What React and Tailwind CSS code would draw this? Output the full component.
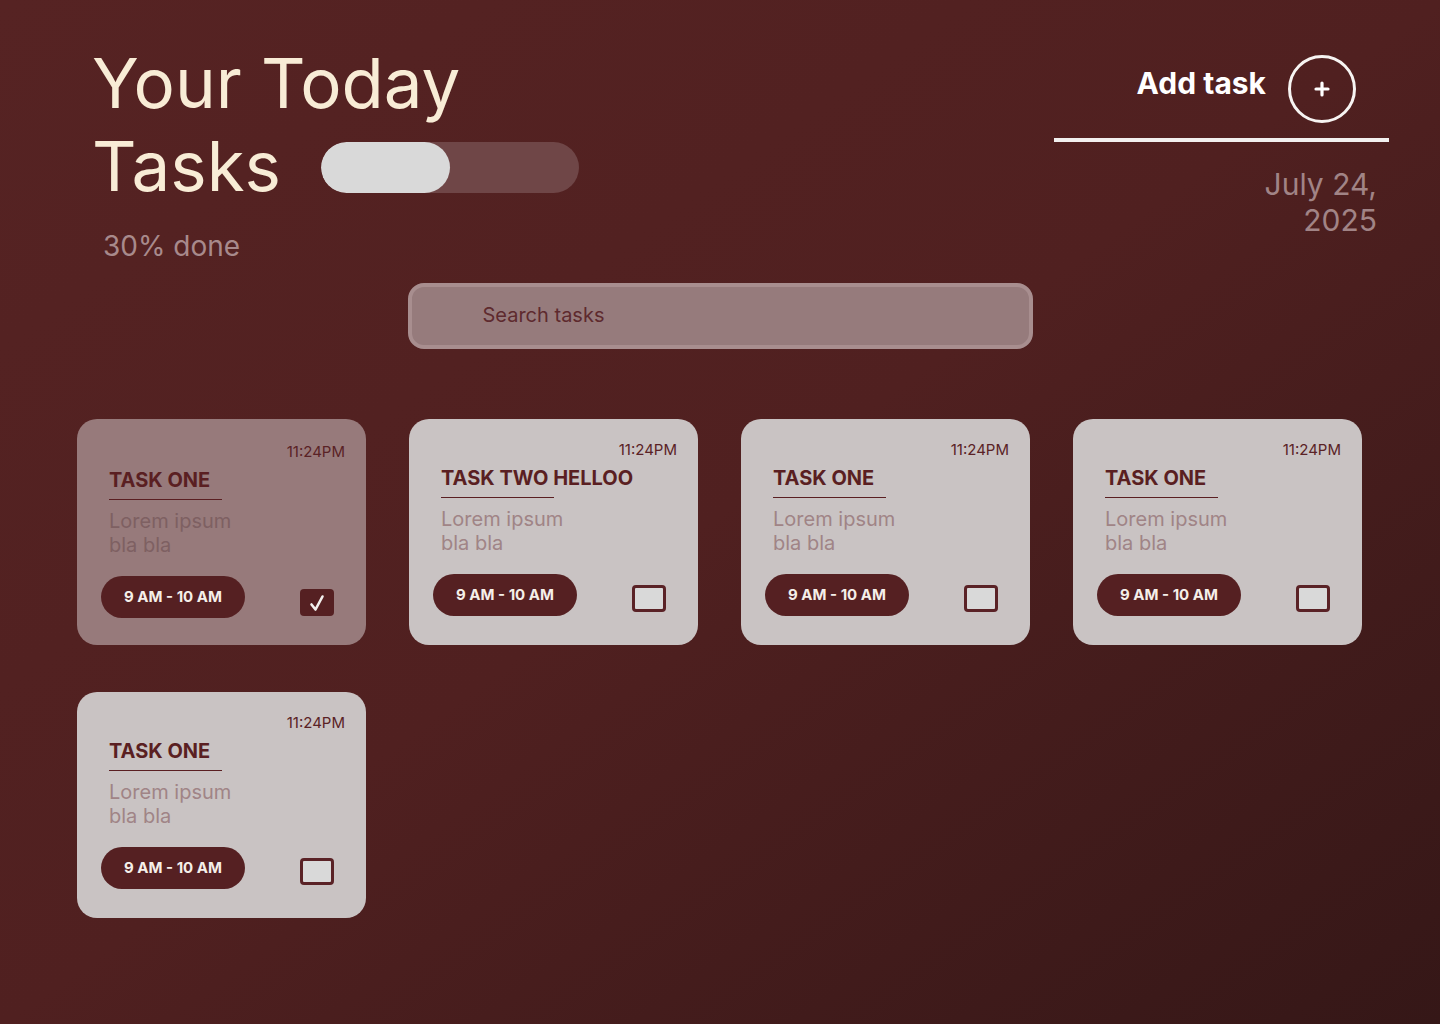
import { useState } from 'react';

const tasks = [
  { id: 1, title: 'TASK ONE', desc: 'Lorem ipsum', desc2: 'bla bla', time: '11:24PM', range: '9 AM - 10 AM', done: true },
  { id: 2, title: 'TASK TWO HELLOO', desc: 'Lorem ipsum', desc2: 'bla bla', time: '11:24PM', range: '9 AM - 10 AM', done: false },
  { id: 3, title: 'TASK ONE', desc: 'Lorem ipsum', desc2: 'bla bla', time: '11:24PM', range: '9 AM - 10 AM', done: false },
  { id: 4, title: 'TASK ONE', desc: 'Lorem ipsum', desc2: 'bla bla', time: '11:24PM', range: '9 AM - 10 AM', done: false },
  { id: 5, title: 'TASK ONE', desc: 'Lorem ipsum', desc2: 'bla bla', time: '11:24PM', range: '9 AM - 10 AM', done: false },
];

function TaskCard({ task, onToggle }) {
  const done = task.done;
  return (
    <div
      className={
        done
          ? 'w-[289px] h-[226px] rounded-[20px] bg-[#977a7b] pl-6 pr-[21px] pt-[24px] flex flex-col'
          : 'w-[289px] h-[226px] rounded-[20px] bg-[#c9c3c3] pl-6 pr-[21px] pt-[22px] flex flex-col'
      }
    >
      <div className="text-right text-[15px] leading-[18px] text-[#5a2226]">{task.time}</div>
      {/* title + fixed width rule */}
      <div className="ml-2 mt-[7px] text-[20px] leading-[24px] font-bold text-[#5a1f22] whitespace-nowrap">
        {task.title}
      </div>
      <div className="ml-2 mt-[7px] w-[113px] h-px bg-[#5a1f22]" />
      <div
        className={
          done
            ? 'ml-2 mt-[9px] text-[20px] leading-[24px] text-[#7e6062]'
            : 'ml-2 mt-[9px] text-[20px] leading-[24px] text-[#a08486]'
        }
      >
        {task.desc}
        <br />
        {task.desc2}
      </div>
      <div className="mt-[19px] flex items-center justify-between">
        <div className="w-[144px] h-[42px] rounded-full bg-[#552022] flex items-center justify-center text-[15px] font-bold text-[#f5efe9]">
          {task.range}
        </div>
        <button
          onClick={onToggle}
          className={
            done
              ? 'mr-[11px] mt-[11px] w-[34px] h-[27px] rounded-[4px] bg-[#552022] flex items-center justify-center'
              : 'mr-[11px] mt-[7px] w-[34px] h-[27px] rounded-[4px] border-[3px] border-[#5a2226] bg-[#d9d9d9]'
          }
        >
          {done && (
            <svg width="16" height="18" viewBox="0 0 16 18" fill="none">
              <path d="M2.5 10.5 L6.5 15.5 L13.5 2.5" stroke="#f3f0ee" strokeWidth="2.6" strokeLinecap="round" strokeLinejoin="round" />
            </svg>
          )}
        </button>
      </div>
    </div>
  );
}

export default function App() {
  const [list, setList] = useState(tasks);
  const toggle = (id) => setList(list.map((t) => (t.id === id ? { ...t, done: !t.done } : t)));

  return (
    <div
      className="w-full min-h-screen h-[1024px] bg-linear-to-br from-[#562323] via-[#502020] to-[#351717] overflow-hidden"
      style={{ fontFamily: 'Inter, "Noto Sans", sans-serif' }}
    >
      {/* Header */}
      <header className="flex justify-between pl-[92px] pr-[51px] pt-[42px]">
        <div>
          <h1 className="text-[69px] leading-[83px] font-normal text-[#f8ecd6]">Your Today</h1>
          <div className="flex items-center">
            <span className="text-[69px] leading-[83px] font-normal text-[#f8ecd6]">Tasks</span>
            <div className="ml-[40px] mt-[2px] w-[258px] h-[51px] rounded-full bg-[#6f4647] overflow-hidden">
              <div className="w-[129px] h-full rounded-full bg-[#d9d9d9]" />
            </div>
          </div>
          <p className="ml-[11px] mt-[21px] text-[28px] leading-[34px] text-[#a88a8c]">30% done</p>
        </div>

        <div className="w-[335px] pt-[13px]">
          <div className="flex items-center justify-end pr-[33px]">
            <span className="mb-[12px] mr-[22px] text-[30px] font-bold text-white">Add task</span>
            <button className="w-[68px] h-[68px] rounded-full border-[3px] border-[#f7f4f2] flex items-center justify-center">
              <svg width="16" height="16" viewBox="0 0 16 16">
                <path d="M8 2 V14 M2 8 H14" stroke="#fff" strokeWidth="3.2" strokeLinecap="round" />
              </svg>
            </button>
          </div>
          <div className="mt-[15px] h-1 bg-[#f2f0ef]" />
          <p className="mt-[24px] pr-3 text-right text-[30px] leading-[36px] text-[#a18486]">
            July 24,
            <br />
            2025
          </p>
        </div>
      </header>

      {/* Search */}
      <div className="mt-[20px] mx-auto w-[625px] h-[66px] rounded-[16px] border-4 border-[#a88e8f] bg-[#967b7c] flex items-center pl-[71px] pb-[3px]">
        <input
          className="w-full bg-transparent outline-none text-[20px] text-[#5e2a2e] placeholder:text-[#5e2a2e]"
          placeholder="Search tasks"
        />
      </div>

      {/* Tasks */}
      <main className="mt-[70px] pl-[77px] grid grid-cols-[repeat(4,289px)] gap-x-[43px] gap-y-[47px]">
        {list.map((t) => (
          <TaskCard key={t.id} task={t} onToggle={() => toggle(t.id)} />
        ))}
      </main>
    </div>
  );
}
